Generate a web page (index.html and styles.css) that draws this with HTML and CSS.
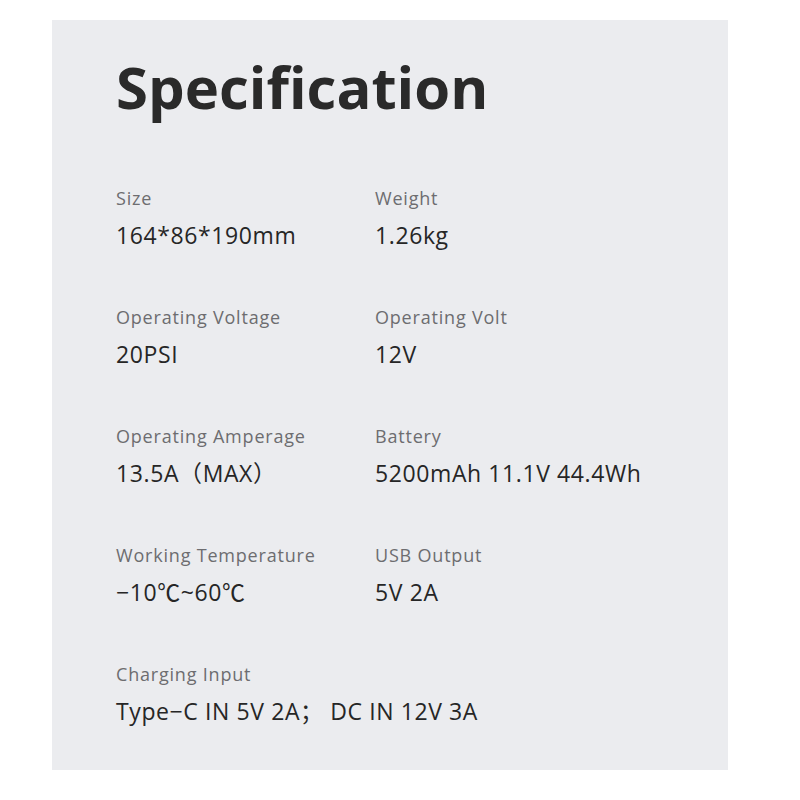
FILE: index.html
```html
<!DOCTYPE html>
<html>
<head>
<meta charset="utf-8">
<link rel="stylesheet" href="styles.css">
</head>
<body>
<div class="panel">
  <h1 class="title">Specification</h1>
  <div class="specs">
    <div class="spec"><div class="label">Size</div><div class="value">164*86*190mm</div></div>
    <div class="spec"><div class="label">Weight</div><div class="value">1.26kg</div></div>
    <div class="spec"><div class="label">Operating Voltage</div><div class="value">20PSI</div></div>
    <div class="spec"><div class="label">Operating Volt</div><div class="value">12V</div></div>
    <div class="spec"><div class="label">Operating Amperage</div><div class="value">13.5A（MAX）</div></div>
    <div class="spec"><div class="label">Battery</div><div class="value">5200mAh 11.1V 44.4Wh</div></div>
    <div class="spec"><div class="label">Working Temperature</div><div class="value">−10℃~60℃</div></div>
    <div class="spec"><div class="label">USB Output</div><div class="value">5V 2A</div></div>
    <div class="spec wide"><div class="label">Charging Input</div><div class="value">Type−C IN 5V 2A；&nbsp;DC IN 12V 3A</div></div>
  </div>
</div>
</body>
</html>
```
FILE: styles.css
```css
html, body {
  margin: 0;
  padding: 0;
  background: #ffffff;
}
body {
  font-family: "Open Sans", "Noto Sans CJK SC", sans-serif;
}
.panel {
  margin: 20px 0 0 52px;
  width: 676px;
  height: 750px;
  box-sizing: border-box;
  padding: 38px 0 0 64px;
  background: #ebecef;
}
.title {
  margin: 0 0 70px 0;
  font-size: 58px;
  line-height: 58px;
  font-weight: 700;
  color: #2a2a2a;
}
.specs {
  display: grid;
  grid-template-columns: 259px 1fr;
  row-gap: 55px;
}
.spec.wide {
  grid-column: 1 / span 2;
}
.label {
  font-size: 18px;
  line-height: 24px;
  color: #6d6d70;
  letter-spacing: 0.8px;
}
.value {
  margin-top: 10px;
  font-size: 23px;
  line-height: 30px;
  color: #262626;
  letter-spacing: 0.6px;
}
```
